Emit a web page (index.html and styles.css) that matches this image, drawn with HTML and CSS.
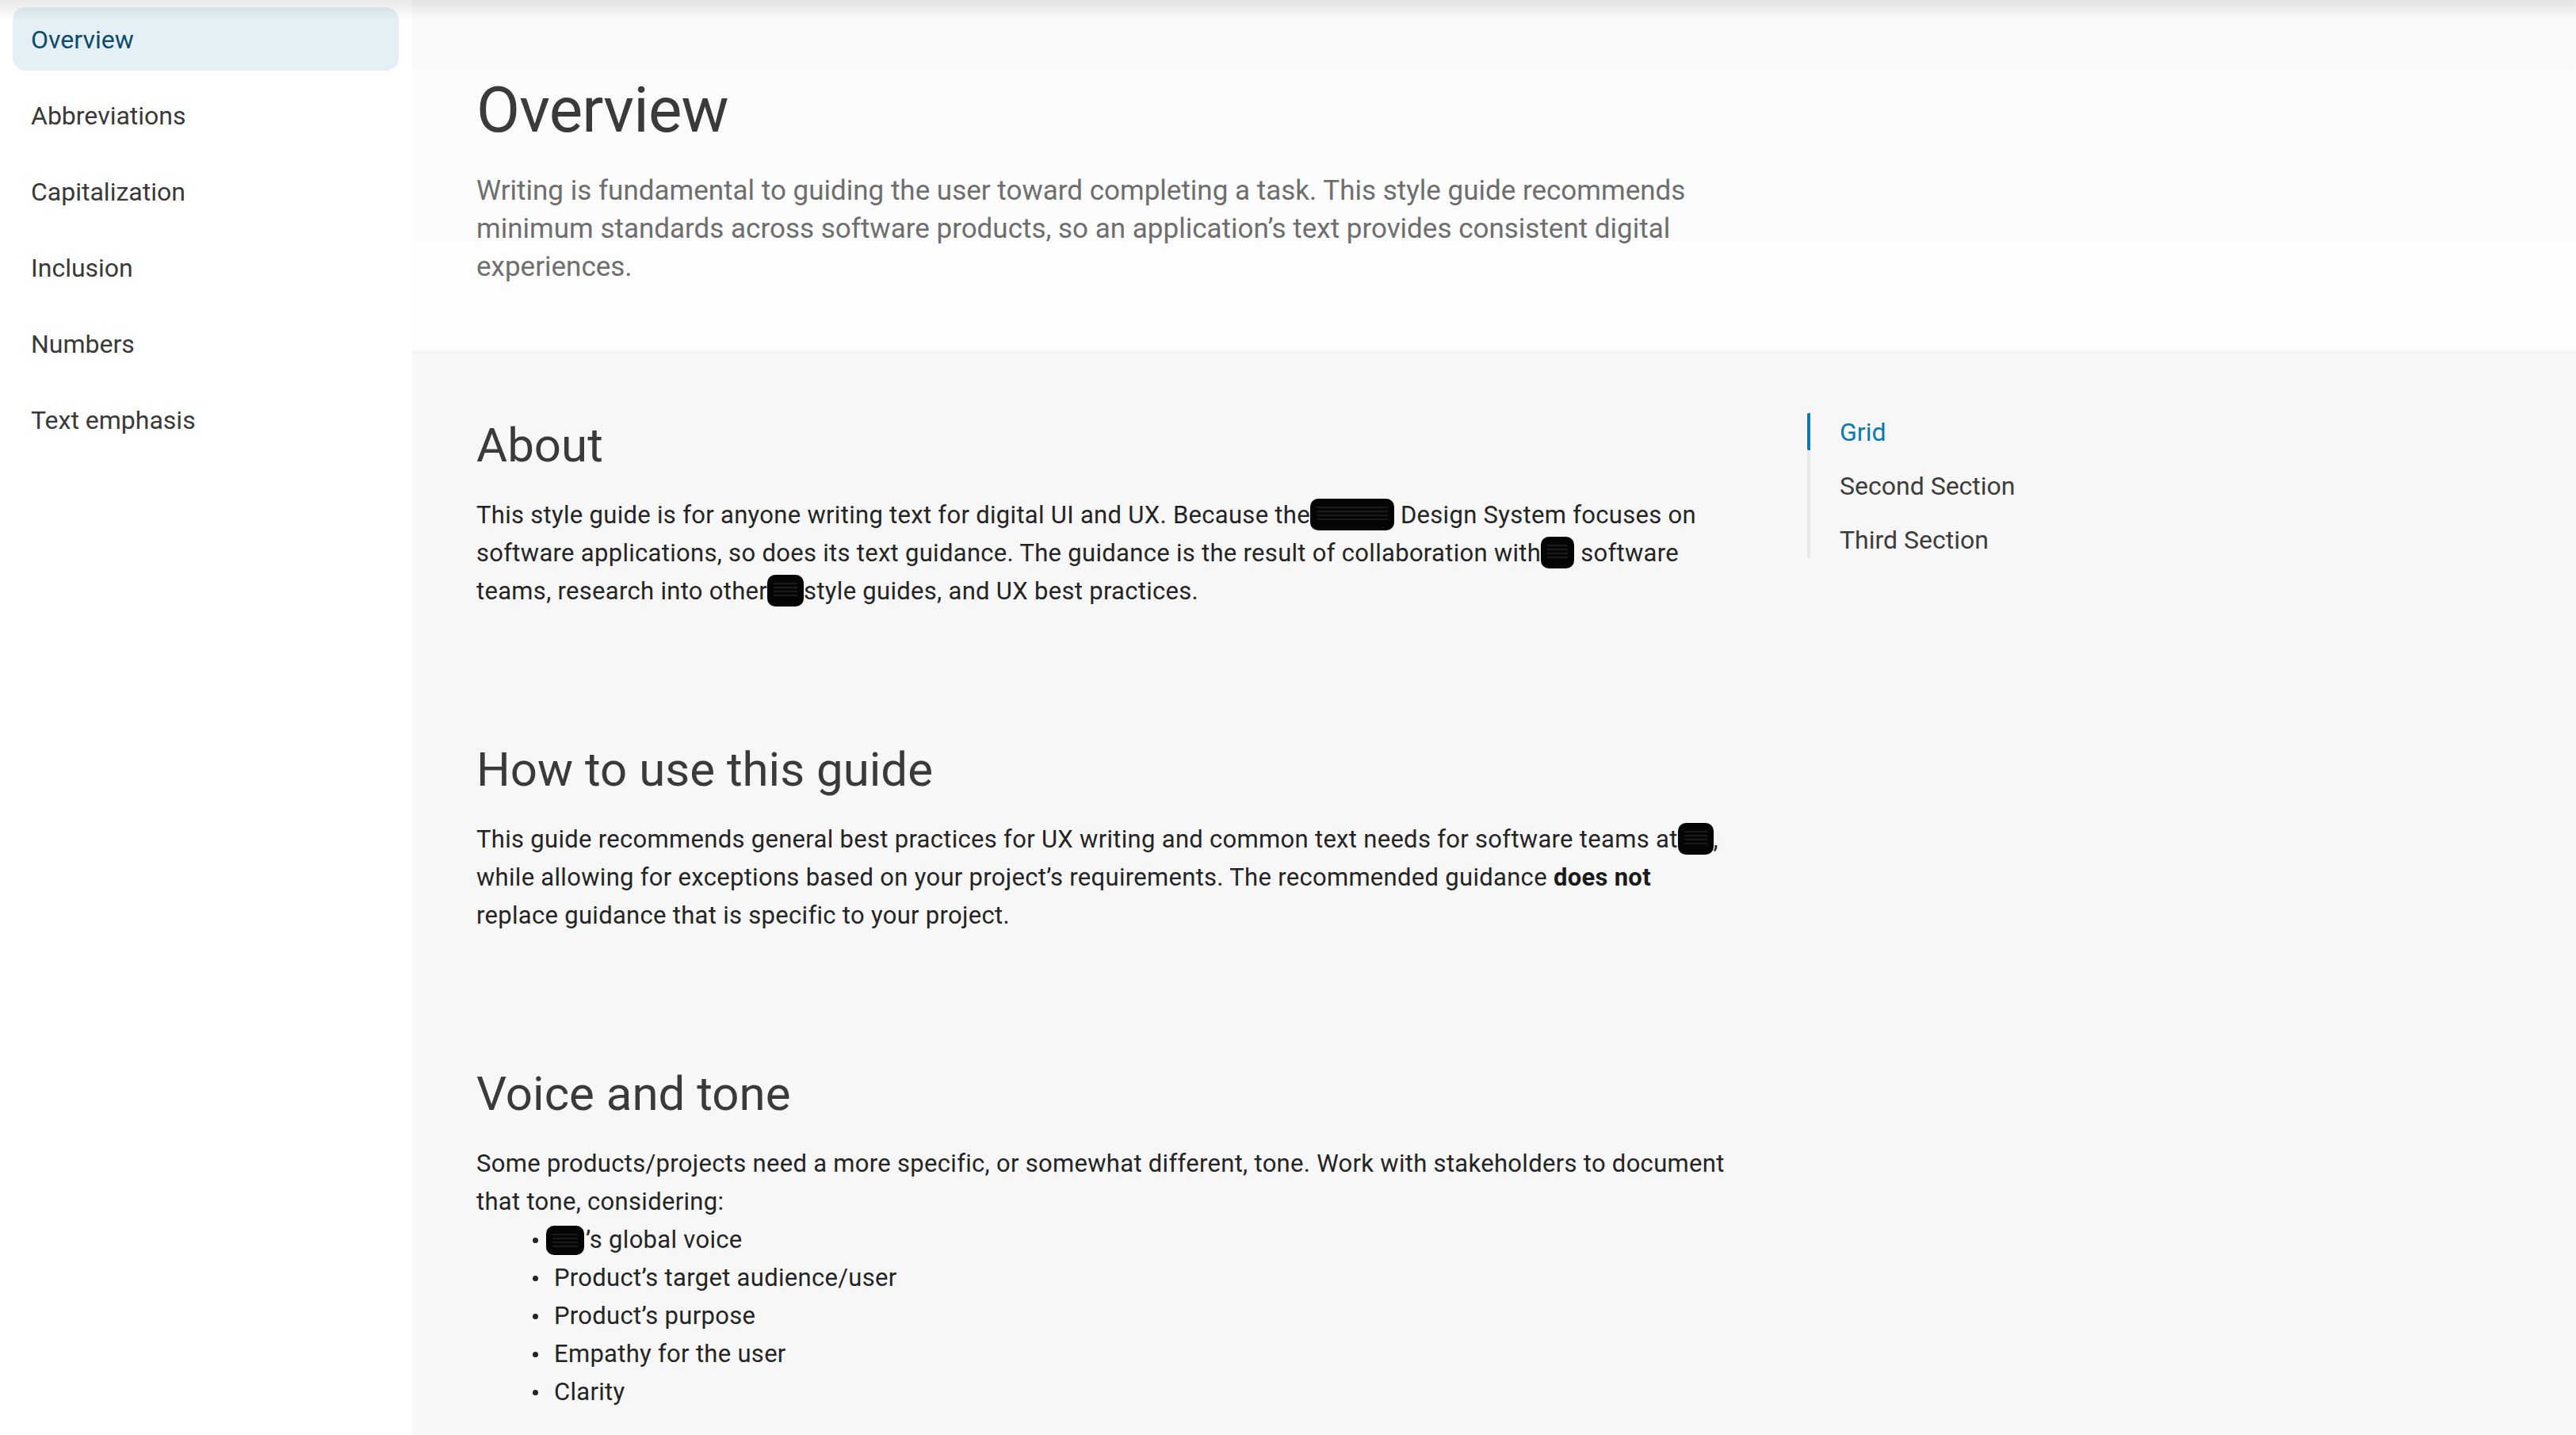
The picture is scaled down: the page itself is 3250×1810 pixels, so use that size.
FILE: index.html
```html
<!DOCTYPE html>
<html lang="en">
<head>
<meta charset="utf-8">
<title>Overview</title>
<link rel="stylesheet" href="styles.css">
</head>
<body>
<div class="page">
  <aside class="sidebar">
    <nav class="side-nav">
      <a class="side-link active" href="#">Overview</a>
      <a class="side-link" href="#">Abbreviations</a>
      <a class="side-link" href="#">Capitalization</a>
      <a class="side-link" href="#">Inclusion</a>
      <a class="side-link" href="#">Numbers</a>
      <a class="side-link" href="#">Text emphasis</a>
    </nav>
  </aside>
  <main class="main">
    <header class="hero">
      <h1 class="hero-title">Overview</h1>
      <p class="hero-intro">Writing is fundamental to guiding the user toward completing a task. This style guide recommends minimum standards across software products, so an application’s text provides consistent digital experiences.</p>
    </header>
    <div class="content">
      <article class="article">
        <section class="section">
          <h2 class="section-title">About</h2>
          <p class="text">This style guide is for anyone writing text for digital UI and UX. Because the<span class="redact w1"></span> Design System focuses on software applications, so does its text guidance. The guidance is the result of collaboration with<span class="redact w2"></span> software teams, research into other<span class="redact w3"></span>style guides, and UX best practices.</p>
        </section>
        <section class="section">
          <h2 class="section-title">How to use this guide</h2>
          <p class="text">This guide recommends general best practices for UX writing and common text needs for software teams at<span class="redact w4"></span>, while allowing for exceptions based on your project’s requirements. The recommended guidance <strong>does not</strong> replace guidance that is specific to your project.</p>
        </section>
        <section class="section">
          <h2 class="section-title">Voice and tone</h2>
          <p class="text">Some products/projects need a more specific, or somewhat different, tone. Work with stakeholders to document that tone, considering:</p>
          <ul class="bullets">
            <li class="bullet"><span class="redact w5 lead"></span>’s global voice</li>
            <li class="bullet">Product’s target audience/user</li>
            <li class="bullet">Product’s purpose</li>
            <li class="bullet">Empathy for the user</li>
            <li class="bullet">Clarity</li>
          </ul>
        </section>
      </article>
      <nav class="toc">
        <a class="toc-link active" href="#">Grid</a>
        <a class="toc-link" href="#">Second Section</a>
        <a class="toc-link" href="#">Third Section</a>
      </nav>
    </div>
  </main>
</div>
<div class="top-shadow"></div>
</body>
</html>
```

FILE: styles.css
```css
* { box-sizing: border-box; }

html, body {
  margin: 0;
  padding: 0;
  height: 100%;
}

body {
  font-family: Roboto, "Liberation Sans", sans-serif;
  color: #262626;
  background: #ffffff;
  overflow: hidden;
  position: relative;
}

.page {
  display: grid;
  grid-template-columns: 520px 1fr;
  min-height: 1810px;
}

/* Sidebar */
.sidebar {
  background: #ffffff;
  padding: 9px 17px 0 16px;
}

.side-nav {
  display: flex;
  flex-direction: column;
  gap: 16px;
}

.side-link {
  display: flex;
  align-items: center;
  height: 80px;
  padding-left: 23px;
  padding-top: 2px;
  border-radius: 16px;
  font-size: 32px;
  color: #393939;
  text-decoration: none;
}

.side-link.active {
  background: #e4eff6;
  color: #0d4a6b;
}

/* Main */
.main {
  background: #f7f7f7;
  display: flex;
  flex-direction: column;
}

.hero {
  background: linear-gradient(#fafafa, #fdfdfd);
  padding: 91px 81px 80px 81px;
}

.hero-title {
  margin: 0;
  font-size: 80px;
  line-height: 96px;
  font-weight: 400;
  color: #3a3a3a;
  letter-spacing: -0.8px;
}

.hero-intro {
  margin: 30px 0 0 0;
  max-width: 1600px;
  font-size: 35px;
  line-height: 48px;
  color: #6e6e6e;
}

.content {
  display: grid;
  grid-template-columns: 1600px 340px;
  column-gap: 79px;
  padding: 80px 0 0 81px;
}

.article {
  display: flex;
  flex-direction: column;
  gap: 165px;
  padding-top: 5px;
}

.section-title {
  margin: 0;
  font-size: 60px;
  line-height: 72px;
  font-weight: 400;
  color: #3a3a3a;
}

.text {
  margin: 28px 0 0 0;
  max-width: 1584px;
  font-size: 31px;
  line-height: 48px;
  letter-spacing: 0.3px;
  color: #242424;
}

.text strong {
  font-weight: 700;
  color: #1a1a1a;
}

.redact {
  display: inline-block;
  height: 40px;
  vertical-align: -9px;
  border-radius: 10px;
  background:
    repeating-linear-gradient(180deg, rgba(90,90,90,0.25) 0 2px, rgba(0,0,0,0) 2px 5px) 8px 10px / calc(100% - 16px) 20px no-repeat,
    #050505;
}

.w1 { width: 106px; }
.w2 { width: 42px; }
.w3 { width: 46px; }
.w4 { width: 45px; }
.w5 { width: 48px; }

.bullets {
  list-style: none;
  margin: 0;
  padding: 0 0 0 98px;
}

.bullet {
  display: flex;
  align-items: center;
  font-size: 31px;
  line-height: 48px;
  letter-spacing: 0.3px;
  color: #242424;
}

.bullet::before {
  content: "";
  width: 7px;
  height: 7px;
  border-radius: 50%;
  background: #242424;
  margin-left: -27px;
  margin-right: 20px;
  flex: none;
}

.bullet .lead {
  height: 37px;
  margin-left: -10px;
  margin-right: 2px;
}

/* TOC */
.toc {
  align-self: start;
  display: flex;
  flex-direction: column;
  gap: 21px;
  border-left: 4px solid #e9e9e9;
}

.toc-link {
  display: flex;
  align-items: center;
  height: 47px;
  padding-left: 37px;
  font-size: 32px;
  color: #3c3c3c;
  text-decoration: none;
}

.toc-link.active {
  color: #0a78b3;
  margin-left: -4px;
  border-left: 4px solid #0a78b3;
  border-radius: 2px;
}

.top-shadow {
  position: absolute;
  left: 0;
  top: 0;
  right: 0;
  height: 26px;
  background: linear-gradient(rgba(0,0,0,0.09), rgba(0,0,0,0));
  pointer-events: none;
}
```
